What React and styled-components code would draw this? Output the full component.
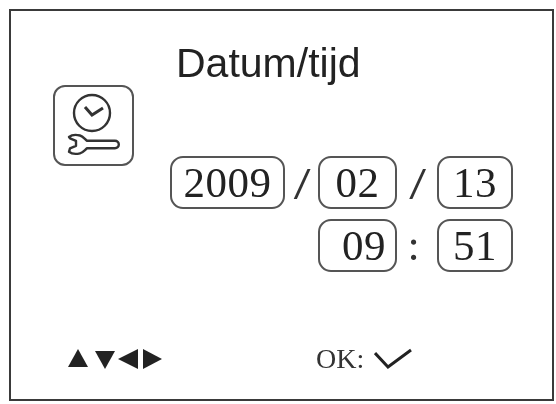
import React from "react";
import styled, { createGlobalStyle } from "styled-components";

const Global = createGlobalStyle`
  html, body { margin: 0; padding: 0; background: #fff; }
  body { width: 556px; height: 404px; overflow: hidden; }
`;

const Frame = styled.div`
  box-sizing: border-box;
  width: 545px;
  height: 392px;
  margin: 9px 0 0 9px;
  border: 2px solid #3a3a3a;
  display: grid;
  grid-template-columns: 157px 1fr;
  grid-template-rows: 68px 196px 1fr;
  color: #2a2a2a;
  filter: blur(0.5px);
`;

const Title = styled.h1`
  grid-column: 2;
  grid-row: 1;
  margin: 0;
  padding: 30px 0 0 8px;
  font: 400 41px/44px "Liberation Sans", Arial, sans-serif;
  color: #222;
`;

const IconCell = styled.div`
  grid-column: 1;
  grid-row: 2;
  padding: 6px 0 0 42px;
`;

const IconBox = styled.div`
  box-sizing: border-box;
  width: 81px;
  height: 81px;
  border: 2px solid #555;
  border-radius: 12px;
  display: flex;
  align-items: center;
  justify-content: center;
`;

const Fields = styled.div`
  grid-column: 2;
  grid-row: 2;
  padding-top: 77px;
  margin-left: 2px;
  display: grid;
  grid-template-columns: 115px 33px 79px 40px 76px;
  grid-auto-rows: 53px;
  row-gap: 10px;
  font-family: "Liberation Serif", "Times New Roman", serif;
`;

const Field = styled.div`
  box-sizing: border-box;
  grid-column: ${(p) => p.$col};
  border: 2px solid #555;
  border-radius: 13px;
  display: flex;
  align-items: center;
  justify-content: ${(p) => (p.$end ? "flex-end" : "center")};
  padding-right: ${(p) => (p.$end ? "9px" : "0")};
  font-size: 43px;
  line-height: 1;
  letter-spacing: 0.5px;
  color: #222;
`;

const Slash = styled.div`
  grid-column: ${(p) => p.$col};
  display: flex;
  align-items: center;
  justify-content: center;
  padding-top: 4px;
  font: italic 400 40px/1 "Liberation Sans", Arial, sans-serif;
  color: #333;
`;

const Colon = styled.div`
  grid-column: ${(p) => p.$col};
  display: flex;
  align-items: center;
  justify-content: center;
  padding-right: 7px;
  font: 400 44px/1 "Liberation Serif", "Times New Roman", serif;
  color: #333;
`;

const Footer = styled.div`
  grid-column: 1 / -1;
  grid-row: 3;
  display: grid;
  grid-template-columns: 302px auto;
  align-items: center;
  justify-content: start;
  align-content: start;
  padding: 69px 0 0 56px;
`;

const Arrows = styled.svg`
  display: block;
`;

const Ok = styled.div`
  display: flex;
  align-items: center;
  gap: 10px;
  margin-left: -53px;
  font: 400 28px/30px "Liberation Serif", "Times New Roman", serif;
  color: #333;
`;

export default function App() {
  return (
    <>
      <Global />
      <Frame>
        <Title>Datum/tijd</Title>
        <IconCell>
          <IconBox>
            <svg width="66" height="66" viewBox="0 0 66 66" fill="none" stroke="#333" strokeWidth="2.4">
              <circle cx="31" cy="20" r="18" />
              <path d="M24 14l7 8 11-7" strokeWidth="3" />
              <path
                d="M8 44c2.500-2 7-2.500 11-1.500 3 .8 4.500 3.200 7 5.200h28a3.800 3.800 0 0 1 0 7.600H26c-2.500 2-4 4.300-7 5-4 1-8.500.5-11-1.500l1-3.500 6-2.500v-5l-6-2.500z"
                strokeLinejoin="round"
                fill="#fff"
              />
            </svg>
          </IconBox>
        </IconCell>
        <Fields>
          <Field $col={1}>2009</Field>
          <Slash $col={2}>/</Slash>
          <Field $col={3}>02</Field>
          <Slash $col={4}>/</Slash>
          <Field $col={5}>13</Field>
          <Field $col={3} $end>09</Field>
          <Colon $col={4}>:</Colon>
          <Field $col={5}>51</Field>
        </Fields>
        <Footer>
          <Arrows width="96" height="20" viewBox="0 0 96 20" fill="#222">
            <path d="M1 18L11 0l10 18z" />
            <path d="M28 2h20L38 20z" />
            <path d="M51 10L71 0v20z" />
            <path d="M76 0l19 10-19 10z" />
          </Arrows>
          <Ok>
            OK:
            <svg width="38" height="24" viewBox="0 0 38 24" fill="none" stroke="#222" strokeWidth="3">
              <path d="M1 6l13 14L37 3" />
            </svg>
          </Ok>
        </Footer>
      </Frame>
    </>
  );
}
